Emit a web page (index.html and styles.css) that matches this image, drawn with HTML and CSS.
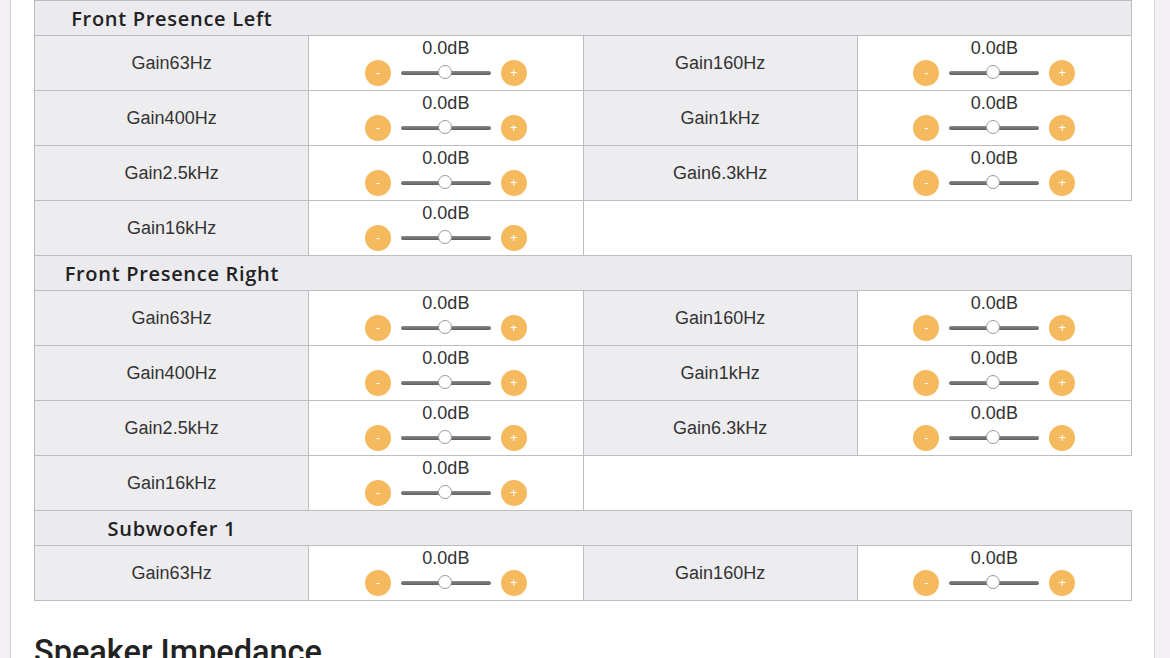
FILE: index.html
```html
<!DOCTYPE html>
<html lang="en">
<head>
    <meta charset="UTF-8">
    <meta name="viewport" content="width=device-width, initial-scale=1.0">
    <title>Speaker Settings</title>
    <link rel="stylesheet" href="styles.css">
</head>
<body>
    <div class="frame">
        <div class="gutter left"></div>
        <div class="page">
            <table class="eq">
                <tbody>
                    <!-- tail of the section above -->
                    <tr class="stub">
                        <td colspan="2"></td>
                        <td class="blank" colspan="2"></td>
                    </tr>

                    <tr class="section">
                        <td class="sec-title">Front Presence Left</td>
                        <td colspan="3"></td>
                    </tr>
                    <tr>
                        <td class="label">Gain63Hz</td>
                        <td class="ctrl"><div class="val">0.0dB</div><div class="knobs"><span class="btn">-</span><span class="track"><span class="thumb"></span></span><span class="btn">+</span></div></td>
                        <td class="label">Gain160Hz</td>
                        <td class="ctrl"><div class="val">0.0dB</div><div class="knobs"><span class="btn">-</span><span class="track"><span class="thumb"></span></span><span class="btn">+</span></div></td>
                    </tr>
                    <tr>
                        <td class="label">Gain400Hz</td>
                        <td class="ctrl"><div class="val">0.0dB</div><div class="knobs"><span class="btn">-</span><span class="track"><span class="thumb"></span></span><span class="btn">+</span></div></td>
                        <td class="label">Gain1kHz</td>
                        <td class="ctrl"><div class="val">0.0dB</div><div class="knobs"><span class="btn">-</span><span class="track"><span class="thumb"></span></span><span class="btn">+</span></div></td>
                    </tr>
                    <tr>
                        <td class="label">Gain2.5kHz</td>
                        <td class="ctrl"><div class="val">0.0dB</div><div class="knobs"><span class="btn">-</span><span class="track"><span class="thumb"></span></span><span class="btn">+</span></div></td>
                        <td class="label">Gain6.3kHz</td>
                        <td class="ctrl"><div class="val">0.0dB</div><div class="knobs"><span class="btn">-</span><span class="track"><span class="thumb"></span></span><span class="btn">+</span></div></td>
                    </tr>
                    <tr>
                        <td class="label">Gain16kHz</td>
                        <td class="ctrl"><div class="val">0.0dB</div><div class="knobs"><span class="btn">-</span><span class="track"><span class="thumb"></span></span><span class="btn">+</span></div></td>
                        <td class="blank" colspan="2"></td>
                    </tr>

                    <tr class="section">
                        <td class="sec-title">Front Presence Right</td>
                        <td colspan="3"></td>
                    </tr>
                    <tr>
                        <td class="label">Gain63Hz</td>
                        <td class="ctrl"><div class="val">0.0dB</div><div class="knobs"><span class="btn">-</span><span class="track"><span class="thumb"></span></span><span class="btn">+</span></div></td>
                        <td class="label">Gain160Hz</td>
                        <td class="ctrl"><div class="val">0.0dB</div><div class="knobs"><span class="btn">-</span><span class="track"><span class="thumb"></span></span><span class="btn">+</span></div></td>
                    </tr>
                    <tr>
                        <td class="label">Gain400Hz</td>
                        <td class="ctrl"><div class="val">0.0dB</div><div class="knobs"><span class="btn">-</span><span class="track"><span class="thumb"></span></span><span class="btn">+</span></div></td>
                        <td class="label">Gain1kHz</td>
                        <td class="ctrl"><div class="val">0.0dB</div><div class="knobs"><span class="btn">-</span><span class="track"><span class="thumb"></span></span><span class="btn">+</span></div></td>
                    </tr>
                    <tr>
                        <td class="label">Gain2.5kHz</td>
                        <td class="ctrl"><div class="val">0.0dB</div><div class="knobs"><span class="btn">-</span><span class="track"><span class="thumb"></span></span><span class="btn">+</span></div></td>
                        <td class="label">Gain6.3kHz</td>
                        <td class="ctrl"><div class="val">0.0dB</div><div class="knobs"><span class="btn">-</span><span class="track"><span class="thumb"></span></span><span class="btn">+</span></div></td>
                    </tr>
                    <tr>
                        <td class="label">Gain16kHz</td>
                        <td class="ctrl"><div class="val">0.0dB</div><div class="knobs"><span class="btn">-</span><span class="track"><span class="thumb"></span></span><span class="btn">+</span></div></td>
                        <td class="blank" colspan="2"></td>
                    </tr>

                    <tr class="section">
                        <td class="sec-title">Subwoofer 1</td>
                        <td colspan="3"></td>
                    </tr>
                    <tr>
                        <td class="label">Gain63Hz</td>
                        <td class="ctrl"><div class="val">0.0dB</div><div class="knobs"><span class="btn">-</span><span class="track"><span class="thumb"></span></span><span class="btn">+</span></div></td>
                        <td class="label">Gain160Hz</td>
                        <td class="ctrl"><div class="val">0.0dB</div><div class="knobs"><span class="btn">-</span><span class="track"><span class="thumb"></span></span><span class="btn">+</span></div></td>
                    </tr>
                </tbody>
            </table>

            <h2 class="heading">Speaker Impedance</h2>
        </div>
        <div class="gutter right"></div>
    </div>
</body>
</html>
```

FILE: styles.css
```css
html, body {
    margin: 0;
    padding: 0;
    height: 100%;
    overflow: hidden;
}
body {
    font-family: "Liberation Sans", Arial, sans-serif;
    color: #333;
    background: #fff;
}
.frame {
    display: flex;
    min-height: 100%;
}
.gutter {
    background: #f4f1f4;
    flex: 0 0 auto;
}
.gutter.left {
    width: 10px;
    border-right: 1px solid #cfcdcf;
}
.gutter.right {
    width: 15px;
    border-left: 1px solid #d6d4d6;
}
.page {
    flex: 1;
    padding: 0 22px 0 23px;
}
.eq {
    width: 100%;
    border-collapse: collapse;
    table-layout: fixed;
}
.eq td {
    border: 1px solid #bdbdc0;
    padding: 0;
    height: 54px;
    text-align: center;
}
.eq .stub td {
    height: 0;
    border-top: none;
}
.eq .label {
    background: #ededf0;
    font-size: 18px;
    color: #333;
    vertical-align: middle;
}
.eq .ctrl {
    background: #fff;
    vertical-align: top;
    height: 52px;
    padding-top: 2px;
}
.eq .blank {
    border: none;
    border-left: 1px solid #bdbdc0;
    background: #fff;
}
.eq .section td {
    height: 34px;
    background: #ebebef;
    border-left: none;
    border-right: none;
}
.eq .section td:first-child {
    border-left: 1px solid #bdbdc0;
}
.eq .section td:last-child {
    border-right: 1px solid #bdbdc0;
}
.eq .sec-title {
    font-family: "Open Sans", "Liberation Sans", sans-serif;
    font-weight: 600;
    font-size: 20px;
    letter-spacing: 0.7px;
    white-space: nowrap;
    color: #222;
    vertical-align: middle;
}
.val {
    font-size: 18px;
    line-height: 20px;
    color: #333;
}
.knobs {
    display: flex;
    align-items: center;
    justify-content: center;
    gap: 10px;
    height: 26px;
    margin-top: 2px;
}
.btn {
    width: 26px;
    height: 26px;
    border-radius: 50%;
    background: #f5b95e;
    color: #fff;
    font-size: 13px;
    line-height: 26px;
    text-align: center;
}
.track {
    position: relative;
    width: 90px;
    height: 4px;
    border-radius: 2px;
    background: linear-gradient(#8a8a8a, #5e5e5e);
}
.thumb {
    position: absolute;
    left: 37px;
    top: -6px;
    width: 14px;
    height: 14px;
    border-radius: 50%;
    background: #fff;
    border: 1px solid #9a9a9a;
    box-sizing: border-box;
}
.heading {
    margin: 32px 0 0;
    font-family: "Roboto", "Liberation Sans", sans-serif;
    font-size: 32.5px;
    font-weight: 500;
    color: #222;
}
```
